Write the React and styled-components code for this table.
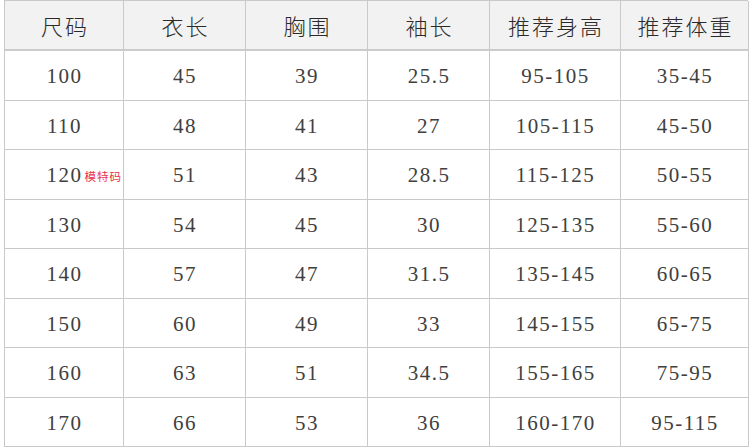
import React from 'react';
import styled, { createGlobalStyle } from 'styled-components';

const GlobalStyle = createGlobalStyle`
  html, body {
    margin: 0;
    padding: 0;
    background: #fff;
  }
`;

const Page = styled.div`
  width: 750px;
  height: 447px;
  padding: 0 0 0 4px;
  box-sizing: border-box;
  background: #fff;
`;

const Grid = styled.div`
  display: grid;
  grid-template-columns: 119px 122px 122px 122px 131px 128px;
  grid-template-rows: 50px;
  grid-auto-rows: 49.5px;
  border-top: 1px solid #c9c9c9;
  border-left: 1px solid #c9c9c9;
  width: 744px;
  box-sizing: border-box;
`;

const HeadCell = styled.div`
  display: flex;
  align-items: center;
  justify-content: center;
  box-sizing: border-box;
  background: #f2f2f2;
  border-right: 1px solid #c9c9c9;
  border-bottom: 2px solid #cbcbcb;
  color: #2a2a2a;
  font-family: "Noto Sans CJK SC", sans-serif;
  font-size: 22px;
  font-weight: 300;
  letter-spacing: 2px;
  padding: 0 0 1px 2px;
`;

const Cell = styled.div`
  display: flex;
  align-items: center;
  justify-content: center;
  box-sizing: border-box;
  border-right: 1px solid #c9c9c9;
  border-bottom: 1px solid #c9c9c9;
  color: #404040;
  font-family: "Liberation Serif", serif;
  font-size: 21px;
  letter-spacing: 1.5px;
  padding: 3px 0 0 1px;
`;

const Num = styled.span`
  position: relative;
`;

const Tag = styled.span`
  position: absolute;
  left: 100%;
  top: 50%;
  transform: translateY(-50%);
  margin-left: 2px;
  white-space: nowrap;
  color: #e8334d;
  font-family: "Noto Sans CJK SC", sans-serif;
  font-size: 11.5px;
  letter-spacing: 1px;
`;

const headers = ['尺码', '衣长', '胸围', '袖长', '推荐身高', '推荐体重'];

const rows = [
  ['100', '45', '39', '25.5', '95-105', '35-45'],
  ['110', '48', '41', '27', '105-115', '45-50'],
  ['120', '51', '43', '28.5', '115-125', '50-55'],
  ['130', '54', '45', '30', '125-135', '55-60'],
  ['140', '57', '47', '31.5', '135-145', '60-65'],
  ['150', '60', '49', '33', '145-155', '65-75'],
  ['160', '63', '51', '34.5', '155-165', '75-95'],
  ['170', '66', '53', '36', '160-170', '95-115'],
];

export default function App() {
  return (
    <Page>
      <GlobalStyle />
      <Grid>
        {headers.map((h) => (
          <HeadCell key={h}>{h}</HeadCell>
        ))}
        {rows.map((r) =>
          r.map((v, i) => (
            <Cell key={r[0] + '-' + i}>
              <Num>
                {v}
                {i === 0 && v === '120' && <Tag>模特码</Tag>}
              </Num>
            </Cell>
          ))
        )}
      </Grid>
    </Page>
  );
}
